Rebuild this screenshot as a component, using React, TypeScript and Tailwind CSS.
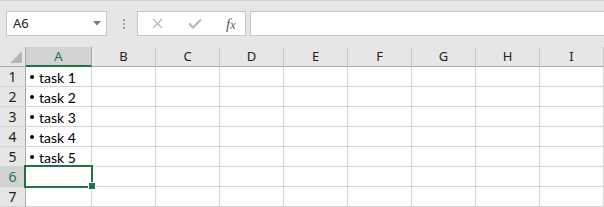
import React from "react";

const columns = ["A", "B", "C", "D", "E", "F", "G", "H", "I"];
const rows = [1, 2, 3, 4, 5, 6, 7];
const tasks: Record<number, string> = {
  1: "task 1",
  2: "task 2",
  3: "task 3",
  4: "task 4",
  5: "task 5",
};

const ui = { fontFamily: '"Noto Sans", "Open Sans", sans-serif' };
const cellFont = { fontFamily: 'Lato, "Noto Sans", sans-serif' };

function FormulaBar() {
  return (
    <div className="flex h-[47px] items-start border-t border-[#d4d4d4] bg-[#e6e6e6] pt-[10px]" style={ui}>
      {/* name box */}
      <div className="ml-[6px] flex h-[25px] w-[101px] items-center justify-between border border-[#c6c6c6] bg-white pl-[6px] pr-[5px]">
        <span className="text-[13px] leading-none text-[#222]">A6</span>
        <svg width="8" height="5" viewBox="0 0 8 5">
          <path d="M0 0H8L4 4.5Z" fill="#7a7a7a" />
        </svg>
      </div>

      {/* grip dots */}
      <div className="ml-[15px] flex h-[25px] w-[3px] flex-col items-center justify-center gap-[2px]">
        <span className="h-[2px] w-[2px] bg-[#a0a0a0]" />
        <span className="h-[2px] w-[2px] bg-[#a0a0a0]" />
        <span className="h-[2px] w-[2px] bg-[#a0a0a0]" />
      </div>

      {/* cancel / enter / fx */}
      <div className="ml-[12px] flex h-[25px] w-[109px] items-center border border-[#c6c6c6] bg-white">
        <svg className="ml-[14px]" width="11" height="11" viewBox="0 0 11 11">
          <path d="M1 1L10 10M10 1L1 10" stroke="#b8b8b8" strokeWidth="1.3" />
        </svg>
        <svg className="ml-[25px]" width="14" height="11" viewBox="0 0 14 11">
          <path d="M1 5.5L5 9.5L13 1.5" stroke="#b8b8b8" strokeWidth="2.2" fill="none" />
        </svg>
        <span
          className="ml-[24px] italic text-[#5a5a5a]"
          style={{ fontFamily: '"Liberation Serif", serif' }}
        >
          <span className="text-[15px]">f</span>
          <span className="text-[12px]">x</span>
        </span>
      </div>

      {/* formula input */}
      <div className="ml-[4px] h-[25px] flex-1 border border-r-0 border-[#c6c6c6] bg-white" />
    </div>
  );
}

function Sheet() {
  return (
    <div className="relative grid grid-cols-[26px_66px_64px_64px_64px_64px_64px_64px_64px_64px] grid-rows-[20px_repeat(7,20px)]">
      {/* corner */}
      <div className="flex items-end justify-end border-r border-b border-[#ababab] bg-[#e6e6e6] pb-[3px] pr-[3px]">
        <svg width="12" height="12" viewBox="0 0 12 12">
          <path d="M12 0V12H0Z" fill="#b5b5b5" />
        </svg>
      </div>
      {columns.map((c) => (
        <div
          key={c}
          className={
            c === "A"
              ? "flex items-center justify-center border-r border-b-2 border-r-[#ababab] border-b-[#217346] bg-[#d2d2d2] pt-[1px] text-[13px] text-[#217346]"
              : "flex items-center justify-center border-r border-b border-r-[#c8c8c8] border-b-[#ababab] bg-[#e6e6e6] pt-[1px] text-[13px] text-[#222]"
          }
          style={ui}
        >
          {c}
        </div>
      ))}

      {rows.map((r) => (
        <React.Fragment key={r}>
          <div
            className={
              r === 6
                ? "flex items-center justify-center border-r border-b border-r-[#217346] border-b-[#d4d4d4] bg-[#d2d2d2] text-[14px] text-[#217346]"
                : "flex items-center justify-center border-r border-b border-r-[#ababab] border-b-[#d4d4d4] bg-[#e6e6e6] text-[14px] text-[#222]"
            }
            style={ui}
          >
            {r}
          </div>
          {columns.map((c) => (
            <div
              key={c}
              className="flex items-center border-r border-b border-[#d4d4d4] bg-white pl-[4px] pt-[1px] text-[14px] text-black"
              style={cellFont}
            >
              {c === "A" && tasks[r] ? (
                <>
                  <span className="mr-[5px] h-[4px] w-[4px] rounded-full bg-black" />
                  <span>{tasks[r]}</span>
                </>
              ) : null}
            </div>
          ))}
        </React.Fragment>
      ))}

      {/* active cell A6 */}
      <div className="pointer-events-none absolute left-[24px] top-[118px] h-[23px] w-[69px] border-2 border-[#217346]" />
      <div className="pointer-events-none absolute left-[88px] top-[135px] h-[8px] w-[8px] border border-white bg-[#217346]" />
    </div>
  );
}

export default function App() {
  return (
    <div className="h-[207px] w-[604px] overflow-hidden bg-white">
      <FormulaBar />
      <Sheet />
    </div>
  );
}
